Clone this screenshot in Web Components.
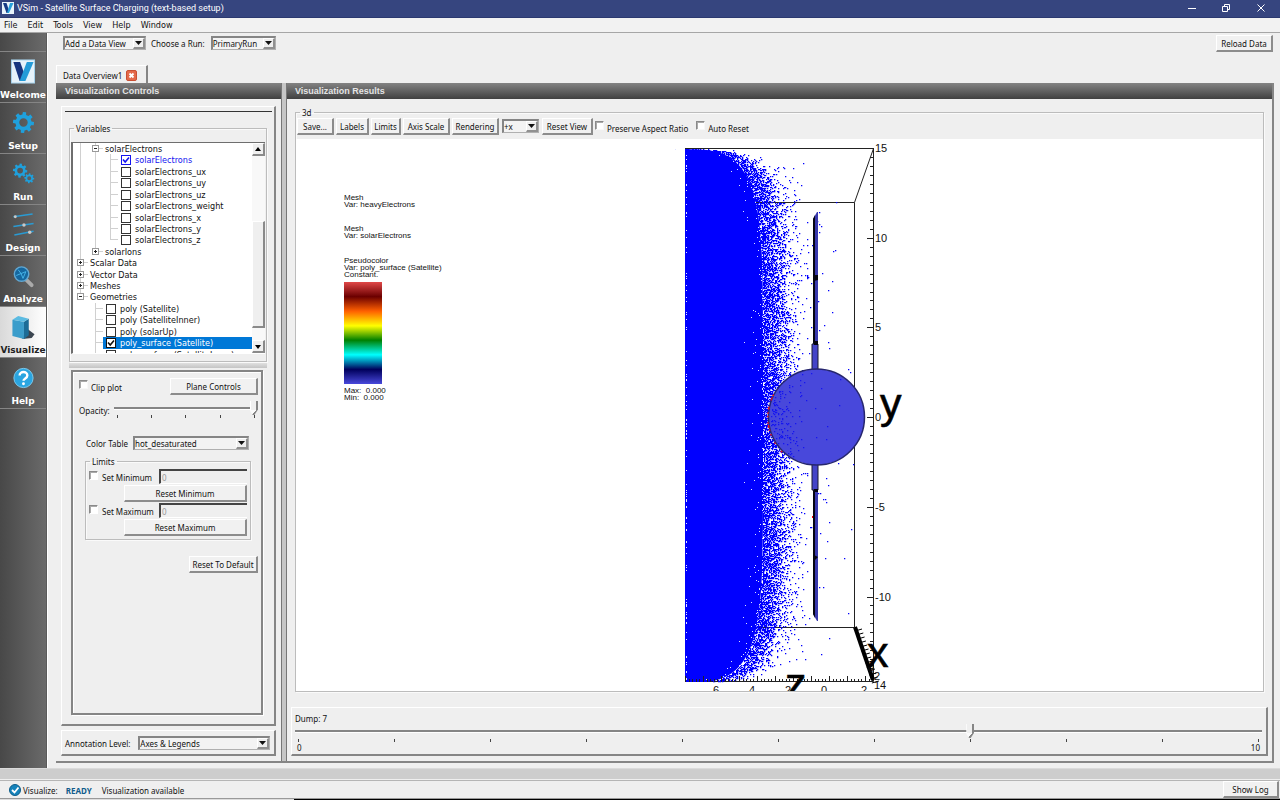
<!DOCTYPE html>
<html lang="en">
<head>
<meta charset="utf-8">
<title>VSim - Satellite Surface Charging (text-based setup)</title>
<style>
  html, body { margin: 0; height: 100%; }
  body {
    background: #efefef; color: #111; overflow: hidden;
    font: 8px/11px "Noto Sans", "DejaVu Sans Condensed", sans-serif;
    --hi: #fff; --lo: #858585; --face: #efefef;
  }
</style>
</head>
<body>
<vs-app></vs-app>
<script>
const base = `
  *, *::before, *::after { box-sizing: border-box; }
  :host { box-sizing: border-box; display: block; }
  :host([hidden]) { display: none; }
  button, input, select { font: inherit; color: inherit; margin: 0; border-radius: 0; }
`;
function define(name, css, html, after) {
  customElements.define(name, class extends HTMLElement {
    constructor() { super(); this.attachShadow({ mode: 'open' }); }
    connectedCallback() {
      if (this.shadowRoot.firstChild) return;
      const body = typeof html === 'function' ? html(this) : html;
      this.shadowRoot.innerHTML = `<style>${base}${css}</style>${body}`;
      if (after) after(this.shadowRoot, this);
    }
  });
}

/* ---------- basic controls ---------- */

define('vs-button', `
  :host { display: inline-block; }
  button { display: block; width: 100%; height: 17px; padding: 1px 2px 0; background: #f1f1f1; white-space: nowrap;
    border: solid; border-width: 1px 2px 2px 1px; border-color: var(--hi) #8c8c8c #8c8c8c var(--hi); line-height: 13px; }
`, `<button type="button"><slot></slot></button>`);

define('vs-check', `
  :host { display: inline-block; }
  label { display: flex; align-items: center; gap: 3px; white-space: nowrap; }
  input { appearance: none; width: 9px; height: 9px; background: #fff; align-self: flex-start;
    border: solid; border-width: 1px; border-color: #8a8a8a #f8f8f8 #f8f8f8 #8a8a8a; box-shadow: inset 1px 1px #aaa; }
  span { padding-top: 2px; }
`, `<label><input type="checkbox"><span><slot></slot></span></label>`);

define('vs-select', `
  :host { display: flex; align-items: center; }
  label { white-space: nowrap; margin-right: var(--label-gap, 6px); }
  .box { display: grid; flex: 1; min-width: 0; height: 14px; background: #f3f3f3;
    border: solid; border-width: 2px 1px 1px 2px; border-color: #858585 #b0b0b0 #b0b0b0 #858585; }
  select { appearance: none; grid-area: 1/1; width: 100%; height: 11px; padding: 0 12px 0 0; border: 0; background: none; line-height: 11px; outline: 0; }
  .arrow { grid-area: 1/1; justify-self: end; width: 12px; height: 11px; pointer-events: none; background: var(--face);
    border: solid; border-width: 1px 2px 2px 1px; border-color: var(--hi) #909090 #909090 var(--hi); }
  svg { display: block; width: 9px; height: 8px; }
`, el => {
  const label = el.getAttribute('label');
  const opts = el.getAttribute('options').split('|');
  return `${label ? `<label for="s">${label}</label>` : ''}<div class="box">
    <select id="s" aria-label="${label || el.getAttribute('name')}">${opts.map(o => `<option>${o}</option>`).join('')}</select>
    <span class="arrow"><svg viewBox="0 0 9 8"><path d="M1 2h7L4.500 6z" fill="#111"/></svg></span></div>`;
});

define('vs-group', `
  fieldset { margin: 0; min-width: 0; height: 100%; border: 1px solid #bcbcbc; padding: 0; box-shadow: inset 1px 1px #fafafa, 1px 1px #fafafa; }
  legend { margin-left: 4px; padding: 0 2px; }
`, el => `<fieldset><legend>${el.getAttribute('label')}</legend><slot></slot></fieldset>`);

define('vs-slider', `
  :host { display: flex; align-items: flex-start; }
  label { white-space: nowrap; padding-top: 4px; margin-right: 4px; }
  .rail { flex: 1; min-width: 0; }
  input { appearance: none; display: block; width: 100%; height: 14px; background: none; outline: 0; }
  input::-webkit-slider-runnable-track { height: 14px; background: linear-gradient(#858585, #858585) 0 6px / 100% 2px no-repeat, linear-gradient(#fff, #fff) 0 8px / 100% 1px no-repeat; }
  input::-webkit-slider-thumb { appearance: none; width: 8px; height: 14px;
    clip-path: polygon(0 0, 100% 0, 100% 60%, 55% 100%, 35% 100%, 0 70%);
    background: linear-gradient(90deg, #fff 0 1px, #efefef 1px 6px, #858585 6px) 0 0 / 100% 9px no-repeat, linear-gradient(135deg, #fafafa 0 50%, #858585 50%) 0 9px / 100% 5px no-repeat; }
  .ticks { display: flex; justify-content: space-between; padding: 0 3px; }
  :host([stacked]) .ticks { padding-top: 1px; }
  .ticks i { width: 1px; height: 3px; background: #444; }
`, el => {
  const n = +el.getAttribute('ticks');
  const l = el.getAttribute('label');
  return `${el.hasAttribute('stacked') ? '' : `<label for="r">${l}</label>`}
  <div class="rail"><input id="r" type="range" aria-label="${l}" min="0" max="${n - 1}" value="${el.getAttribute('value')}">
  <div class="ticks">${'<i></i>'.repeat(n)}</div></div>`;
});

define('vs-header', `
  :host { height: 16px; padding: 0 8px; font: bold 9px/16px "Liberation Sans", Arial, sans-serif; color: #e4e4e4;
    background: linear-gradient(#838383, #404040); }
`, `<slot></slot>`);

define('vs-raised', `
  :host { border: solid; border-width: 1px 2px 2px 1px; border-color: var(--hi) var(--lo) var(--lo) var(--hi); min-width: 0; }
`, `<slot></slot>`);

/* ---------- window chrome ---------- */

define('vs-titlebar', `
  :host { display: flex; align-items: center; height: 18px; padding: 0 12px 1px 2px; background: #36457f; border-bottom: 1px solid #2b3970;
    color: #fff; font: 9px/15px Roboto, "Noto Sans", sans-serif; }
  svg { display: block; }
  h1 { flex: 1; margin: 0 0 0 3px; padding-top: 1px; font: inherit; }
  nav { display: flex; gap: 20px; }
  button { padding: 0; border: 0; background: none; width: 14px; height: 14px; }
`, `
  <svg width="12" height="12" viewBox="0 0 24 24"><rect width="24" height="24" fill="#e9f4fb"/><path d="M2 2h7l5 15-2 5h-3z" fill="#173a86"/><path d="M16 2h7L14 22h-4z" fill="#27a0db"/></svg>
  <h1>VSim - Satellite Surface Charging (text-based setup)</h1>
  <nav>
    <button type="button" aria-label="Minimize"><svg width="14" height="14" viewBox="0 0 14 14"><path d="M2 7.500h8" stroke="#fff"/></svg></button>
    <button type="button" aria-label="Restore"><svg width="14" height="14" viewBox="0 0 14 14" fill="none" stroke="#fff"><path d="M2.500 5.500h5v5h-5zM4.500 5V3.500h5v5H8"/></svg></button>
    <button type="button" aria-label="Close"><svg width="14" height="14" viewBox="0 0 14 14" stroke="#fff"><path d="M3.500 3.500l7 7m0-7l-7 7"/></svg></button>
  </nav>`);

define('vs-menubar', `
  :host { height: 15px; background: #f2f2f2; border-bottom: 1px solid #a6a6a6; font: 9px/15px "DejaVu Sans Condensed", "DejaVu Sans", sans-serif; }
  nav { display: flex; gap: 10px; padding: 0 4px; }
  a { color: #111; text-decoration: none; }
`, `<nav><a href="#">File</a><a href="#">Edit</a><a href="#">Tools</a><a href="#">View</a><a href="#">Help</a><a href="#">Window</a></nav>`);

const gear = (cx, cy, r) => {
  let d = '';
  const n = 8, at = (rad, a) => `${(cx + rad * Math.cos(a)).toFixed(2)} ${(cy + rad * Math.sin(a)).toFixed(2)}`;
  for (let i = 0; i < n; i++) {
    const a = i * 2 * Math.PI / n + .1, s = Math.PI / n;
    d += `${i ? 'L' : 'M'}${at(r * .76, a - s * .6)}L${at(r, a - s * .4)}L${at(r, a + s * .4)}L${at(r * .76, a + s * .6)}`;
  }
  const h = r * .4;
  return `<path fill-rule="evenodd" fill="#1fa0dc" d="${d}ZM${cx - h} ${cy}a${h} ${h} 0 1 0 ${2 * h} 0a${h} ${h} 0 1 0 ${-2 * h} 0Z"/>`;
};
const icons = {
  welcome: `<rect x="1" y="1" width="24" height="24" fill="#e6f2fa" stroke="#a6d3ee"/><path d="M3 3h7l5 14-3 6H9.500z" fill="#17357f"/><path d="M17 3h7l-8.500 20h-6z" fill="#239bd8"/>`,
  setup: gear(13.5, 13, 11),
  run: gear(10, 10, 7.5) + gear(19.5, 18, 5.2),
  design: `<g stroke="#2a9bd3" stroke-width="1.500"><path d="M3 5l20-3M3 15l21-3M4 24l20-4"/></g><g fill="#c8c8c8"><circle cx="5" cy="5" r="1.500"/><circle cx="14" cy="13.500" r="1.800"/><circle cx="20" cy="21" r="1.800"/></g>`,
  analyze: `<path d="M16 17l6 6" stroke="#aaa" stroke-width="4" stroke-linecap="round"/><circle cx="11.500" cy="11.500" r="7.500" fill="#15679f" stroke="#61a7d2" stroke-width="1.500"/><path d="M8 7l3 4 5-2-3 7M6 13l5-2 2 5" fill="none" stroke="#46b4e8"/>`,
  visualize: `<path d="M12 26l10-1 3-4-8-6z" fill="#3b4550"/><path d="M2 6l12 2v18L2 23z" fill="#3b9dcb"/><path d="M14 8l5-3v17l-5 4z" fill="#1c6c97"/><path d="M2 6l6-4 11 3-5 3z" fill="#5bbbe2"/>`,
  help: `<circle cx="13.500" cy="13.500" r="10" fill="#2aa5e0" stroke="#7fcbee"/><path d="M9.500 11c0-5 8-5 8 0 0 3-4 3-4 5.500" fill="none" stroke="#fff" stroke-width="2.500"/><circle cx="13.500" cy="19.500" r="1.500" fill="#fff"/>`
};

define('vs-nav-item', `
  a { display: flex; flex-direction: column; align-items: center; gap: 5px; height: 51px; padding: 7px 0 0;
    border-top: 1px solid #858585; color: #fff; text-decoration: none; font: bold 9px/13px "DejaVu Sans", sans-serif; }
  svg { display: block; }
  :host([active]) a { color: #222; background: linear-gradient(90deg, #d9d9d9, #fff); }
`, el => `<a href="#"><svg width="26" height="26" viewBox="0 0 26 26">${icons[el.getAttribute('icon')]}</svg><span><slot></slot></span></a>`);

define('vs-sidebar', `
  :host { background: linear-gradient(90deg, #484848, #6a6a6a); border-right: 1px solid #5a5a5a; padding-top: 18px; }
  nav { border-bottom: 1px solid #858585; }
`, `<nav>
  <vs-nav-item icon="welcome">Welcome</vs-nav-item><vs-nav-item icon="setup">Setup</vs-nav-item>
  <vs-nav-item icon="run">Run</vs-nav-item><vs-nav-item icon="design">Design</vs-nav-item>
  <vs-nav-item icon="analyze">Analyze</vs-nav-item><vs-nav-item icon="visualize" active>Visualize</vs-nav-item>
  <vs-nav-item icon="help">Help</vs-nav-item></nav>`);

define('vs-toolbar', `
  :host { display: flex; align-items: flex-start; height: 32px; padding: 2px 1px 0 7px; }
  .view { width: 83px; margin: 1px 5px 0 0; }
  .run { width: 125px; margin-top: 1px; --label-gap: 6px; }
  .reload { margin-left: auto; width: 57px; }
`, `<vs-select class="view" name="Data view" options="Add a Data View"></vs-select>
  <vs-select class="run" label="Choose a Run:" options="PrimaryRun"></vs-select>
  <vs-button class="reload">Reload Data</vs-button>`);

define('vs-tab', `
  :host { display: flex; align-items: center; gap: 4px; width: 92px; height: 18px; padding: 1px 0 0 6px;
    border: solid; border-width: 1px 2px 0 1px; border-color: #fff #858585 #fff #fff; white-space: nowrap; }
  button { padding: 0; border: 0; background: none; }
  svg { display: block; }
`, `<span><slot></slot></span><button type="button" aria-label="Close tab"><svg width="11" height="11" viewBox="0 0 11 11"><rect x=".5" y=".5" width="10" height="10" rx="1.500" fill="#e4694a" stroke="#c94f33"/><path d="M3.500 3.500l4 4m0-4l-4 4" stroke="#fff" stroke-width="1.800"/></svg></button>`);

/* ---------- variable tree ---------- */

define('vs-node', `
  :host { display: flex; align-items: stretch; min-height: 0; white-space: nowrap; overflow: visible; }
  .g { flex: none; width: 15px; position: relative; }
  .g.line::before, .j::before { content: ""; position: absolute; left: 7px; top: 0; bottom: 0; border-left: 1px solid #d0d0d0; }
  .j.end::before { bottom: 50%; }
  .j::after { content: ""; position: absolute; left: 8px; right: 0; top: 5px; border-top: 1px solid #d0d0d0; }
  .x { position: absolute; z-index: 1; left: 4px; top: 2px; width: 7px; height: 7px; padding: 0; border: 1px solid #999; background: linear-gradient(#222, #222) 1px 2px / 3px 1px no-repeat #fff; }
  .x.plus { background: linear-gradient(#222, #222) 1px 2px / 3px 1px no-repeat, linear-gradient(#222, #222) 2px 1px / 1px 3px no-repeat #fff; }
  label { display: flex; flex: 1; }
  input { appearance: none; flex: none; width: 10px; height: 10px; margin: 1px 3px 0 3px; border: 1px solid #333; background: #fff; }
  :host([checked]) input { border-color: currentColor; }
  .in { position: relative; display: flex; }
  svg { position: absolute; left: 4px; top: 2px; pointer-events: none; }
  .t { flex: 1; padding-left: 2px; line-height: 12px; }
  .c .t { padding-left: 1px; }
  :host([checked]) { color: #1414f0; }
  :host([selected]) { color: #fff; }
  :host([selected]) .c { background: #0078d7; }
  :host([selected]) input { border-color: #111; }
  :host([selected]) svg { color: #111; }
`, el => {
  const lines = el.getAttribute('lines') || '';
  const kind = el.getAttribute('kind');
  const pos = el.getAttribute('pos') || '';
  let h = [...lines].map(c => `<span class="g${c === '1' ? ' line' : ''}"></span>`).join('');
  h += `<span class="g j ${pos}">${kind === 'leaf' ? '' : `<button type="button" class="x ${kind}" aria-label="Toggle"></button>`}</span>`;
  if (kind !== 'leaf') return h + `<span class="t"><slot></slot></span>`;
  const ck = el.hasAttribute('checked');
  return h + `<label class="c"><span class="in"><input type="checkbox"${ck ? ' checked' : ''}>${ck ? `<svg width="8" height="8" viewBox="0 0 8 8"><path d="M1 3.500l2.200 2.500L7 1.500" fill="none" stroke="currentColor" stroke-width="1.600"/></svg>` : ''}</span><span class="t"><slot></slot></span></label>`;
});

define('vs-scrollbar', `
  :host { display: flex; flex-direction: column; width: 13px; background: #f8f8f8; }
  button { flex: none; height: 13px; padding: 0; background: var(--face); border: solid; border-width: 1px 2px 2px 1px; border-color: #fff #8a8a8a #8a8a8a #fff; }
  svg { display: block; width: 10px; height: 10px; }
  .up { flex: 66; } .thumb { flex: 106; background: var(--face); border: solid; border-width: 1px 2px 2px 1px; border-color: #fff #8a8a8a #8a8a8a #fff; } .dn { flex: 12; }
`, `<button type="button" aria-label="Scroll up"><svg viewBox="0 0 10 10"><path d="M2 7h6L5 3z"/></svg></button>
  <i class="up"></i><i class="thumb"></i><i class="dn"></i>
  <button type="button" aria-label="Scroll down"><svg viewBox="0 0 10 10"><path d="M2 4h6L5 8z"/></svg></button>`);

const leaf = (lines, text, extra = '') => `<vs-node kind="leaf" lines="${lines}" ${extra}>${text}</vs-node>`;
define('vs-tree', `
  :host { display: flex; height: 212px; background: #fff; border: solid; border-width: 1px 0 1px 2px; border-color: #6e6e6e #fff #fff #6e6e6e;
    font-family: "DejaVu Sans Condensed", "DejaVu Sans", sans-serif; font-size: 9px; }
  .view { flex: 1; min-width: 0; overflow: hidden; }
  .rows { display: grid; grid-auto-rows: 1fr; height: 217px; }
`, `<div class="view"><div class="rows">
  <vs-node kind="minus" lines="1">solarElectrons</vs-node>
  ${leaf('11', 'solarElectrons', 'checked')}
  ${['ux', 'uy', 'uz', 'weight', 'x', 'y'].map(s => leaf('11', 'solarElectrons_' + s)).join('')}
  ${leaf('11', 'solarElectrons_z', 'pos="end"')}
  <vs-node kind="plus" lines="1" pos="end">solarIons</vs-node>
  <vs-node kind="plus">Scalar Data</vs-node>
  <vs-node kind="plus">Vector Data</vs-node>
  <vs-node kind="plus">Meshes</vs-node>
  <vs-node kind="minus" pos="end">Geometries</vs-node>
  ${leaf('0', 'poly (Satellite)')}${leaf('0', 'poly (SatelliteInner)')}${leaf('0', 'poly (solarUp)')}
  ${leaf('0', 'poly_surface (Satellite)', 'checked selected')}
  ${leaf('0', 'poly_surface (SatelliteInner)')}
  </div></div><vs-scrollbar></vs-scrollbar>`);

/* ---------- left column ---------- */

define('vs-limit', `
  .row { display: grid; grid-template-columns: 70px 1fr; align-items: start; }
  label { display: flex; gap: 4px; align-items: flex-start; white-space: nowrap; }
  label input { appearance: none; width: 9px; height: 9px; margin: 2px 0 0; background: #fff; border: 1px solid; border-color: #8a8a8a #fff #fff #8a8a8a; box-shadow: inset 1px 1px #aaa; }
  label span { padding-top: 3px; }
  .n { width: 100%; height: 15px; padding: 1px 0 0 1px; background: var(--face); color: #999; border: solid; border-width: 2px 0 1px 2px; border-color: #444 #fff #fff #444; }
  vs-button { display: block; margin: 1px 0 1px 35px; }
`, el => { const n = el.getAttribute('name');
  return `<div class="row"><label><input type="checkbox"><span>Set ${n}</span></label><input class="n" type="text" value="0" disabled aria-label="${n}"></div>
  <vs-button>Reset ${n}</vs-button>`; });

define('vs-plot-options', `
  :host { display: flex; flex-direction: column; flex: 1; min-height: 0; padding: 5px 3px 0 6px;
    border: 2px solid var(--lo); box-shadow: inset 1px 1px #fff, 1px 1px #fff; }
  .clip { display: flex; justify-content: space-between; }
  .clip vs-check { margin-top: 3px; }
  .clip vs-button { width: 88px; margin-top: 1px; }
  .op { margin-top: 6px; }
  .ct { width: 163px; margin: 18px 0 0 7px; --label-gap: 5px; }
  .lim { width: 166px; height: 84px; margin: 6px 0 0 6px; }
  .in { padding: 2px 3px 0; }
  .def { align-self: flex-end; width: 69px; margin-top: 16px; }
`, `<div class="clip"><vs-check>Clip plot</vs-check><vs-button>Plane Controls</vs-button></div>
  <vs-slider class="op" label="Opacity:" ticks="5" value="4"></vs-slider>
  <vs-select class="ct" label="Color Table" options="hot_desaturated"></vs-select>
  <vs-group class="lim" label="Limits"><div class="in"><vs-limit name="Minimum"></vs-limit><vs-limit name="Maximum"></vs-limit></div></vs-group>
  <vs-button class="def">Reset To Default</vs-button>`);

define('vs-controls', `
  :host { display: flex; flex-direction: column; }
  vs-header { padding-left: 9px; }
  .main { display: flex; flex-direction: column; flex: 1; min-height: 0; margin: 7px 5px 0; padding: 4px 7px 9px; }
  hr { width: auto; height: 1px; margin: 0 -5px 11px -4px; border: 0; background: #333; }
  .vars { height: 239px; flex: none; }
  .tree { padding: 8px 1px 0; }
  .split { height: 5px; margin: 1px 0 2px; background: linear-gradient(#e0e0e0, #c4c4c4); flex: none; }
  vs-plot-options { margin: 0 4px 0 2px; }
  .ann { margin: 4px 5px 5px; padding: 5px 4px 4px 3px; height: 26px; }
  .ann vs-select { --label-gap: 8px; }
`, `<vs-header>Visualization Controls</vs-header>
  <vs-raised class="main"><hr>
    <vs-group class="vars" label="Variables"><div class="tree"><vs-tree></vs-tree></div></vs-group>
    <div class="split"></div>
    <vs-plot-options></vs-plot-options>
  </vs-raised>
  <vs-raised class="ann"><vs-select label="Annotation Level:" options="Axes &amp; Legends"></vs-select></vs-raised>`);

/* ---------- 3d scene ---------- */

function scene() {
  let seed = 20231;
  const rnd = () => ((seed = (seed * 1664525 + 1013904223) >>> 0) / 4294967296);
  const L = 389, CY = 277;
  const edge = y => L + 82 * Math.pow(Math.max(0, 1 - Math.pow(Math.min(1, Math.abs(y - CY) / 267), 6)), .3);
  let solid = `M${L} 10`, dots = '', holes = '', over = '', red = '';
  for (let y = 10; y <= 543; y++) solid += `L${Math.max(L, edge(y) - 4).toFixed(1)} ${y}`;
  solid += `L${L} 543Z`;
  for (let y = 10; y < 543; y++) {
    const e = edge(y);
    const lim = Math.min(1, .6 + Math.min(y - 10, 543 - y) / 50);
    for (let x = Math.max(L, Math.round(e) - 4); x < e + 88; x++) {
      const d = (x - e) / lim;
      const p = .62 / (1 + Math.exp((d - 14) / 6)) + .06 * Math.exp(-Math.max(0, d) / 20);
      if (rnd() < p) {
        const inBall = (x - 521) ** 2 + (y - 278) ** 2 < 47 ** 2;
        if (!inBall) dots += `M${x} ${y}h1.300v1.300h-1.300z`;
        else if (rnd() < .35) over += `M${x} ${y}h1.300v1.300h-1.300z`;
      }
    }
    if (rnd() < .35) holes += `M${(e - 4 - rnd() * rnd() * 20).toFixed(0)} ${y}h1v1h-1z`;
    if (rnd() < .18) holes += `M${L + 1} ${y}h1v1h-1z`;
  }
  for (let i = 0; i < 16; i++) {
    const a = Math.PI + (rnd() - .6) * 1.3;
    red += `M${(520 + 49 * Math.cos(a)).toFixed(1)} ${(278 + 49 * Math.sin(a)).toFixed(1)}h1.500v1.500h-1.500z`;
  }
  let t = '';
  for (let i = 0; i <= 59; i++) { const y = 9.5 + Math.round(i * 8.97); t += i % 10 ? `M574 ${y}h4` : `M571 ${y}h7`; }
  for (let i = 0; i < 53; i++) { const x = 389.5 + Math.round(i * 3.6); t += `M${x} 543v${i % 5 ? -3 : -6}`; }
  let xt = '';
  for (let i = 0; i < 14; i++) xt += `M${559 + i * 1.3} ${492 + i * 4}l7 -2`;
  return `<svg viewBox="0 0 967 552" preserveAspectRatio="xMidYMid slice" role="img" aria-label="3d view">
    <defs><linearGradient id="bar" x1="0" y1="0" x2="0" y2="1">
      <stop offset="0" stop-color="#e04848"/><stop offset=".143" stop-color="#6b0000"/><stop offset=".286" stop-color="#ff6000"/><stop offset=".43" stop-color="#ff0"/>
      <stop offset=".57" stop-color="#008000"/><stop offset=".714" stop-color="#0ff"/><stop offset=".857" stop-color="#00005b"/><stop offset="1" stop-color="#4848db"/></linearGradient></defs>
    <g fill="none" stroke="#222"><path d="M389 9.500H577.500L558.500 63.500H440M558.500 63.500V488.500H440M577.500 9.500V542.500H389M389.500 9v534"/></g>
    <path d="${solid}" fill="#00f"/><path d="${dots}" fill="#00f"/><path d="${holes}" fill="#dfe3ff"/>
    <path d="${t}" stroke="#222" fill="none"/>
    <path d="M517 80l4 -7h1v156h-5z" fill="#3838ac"/><path d="M517 80l2 -4v154h-2z" fill="#050510"/><path d="M516 205h6v26h-6z" fill="#4444c8" stroke="#181830"/>
    <path d="M517 475l4 7h1V326h-5z" fill="#3838ac"/><path d="M517 475l2 4V326h-2z" fill="#050510"/><path d="M516 325h6v26h-6z" fill="#4444c8" stroke="#181830"/>
    <path d="M518 136h4v5l-4 1zM518 202h4v4h-4zM518 416l4 2-4 4zM518 350h4v3h-4z" fill="#050510"/>
    <circle cx="520.500" cy="278" r="48" fill="#4848db" stroke="#26266e" stroke-width="1.500"/>
    <path d="${over}" fill="#1515f0"/><path d="${red}" fill="#f01020"/><path d="M516 377h1v2h-1z" fill="red"/>
    <path d="M559 488L577 541" stroke="#000" stroke-width="4"/><path d="${xt}" stroke="#000"/>
    <g font-family="Liberation Sans, Arial, sans-serif" font-size="11" fill="#111">
      <text x="579" y="13">15</text><text x="579" y="103">10</text><text x="579" y="192">5</text><text x="579" y="282">0</text><text x="579" y="372">-5</text><text x="579" y="462">-10</text>
      <text x="417" y="555">6</text><text x="453" y="555">4</text><text x="489" y="555">2</text><text x="525" y="555">0</text><text x="565" y="555">2</text>
      <text x="572" y="533">0</text><text x="578" y="541">2</text><text x="578" y="550">14</text>
    </g>
    <g font-family="Liberation Sans, Arial, sans-serif" font-size="43" fill="#000" stroke="#000" stroke-width=".6">
      <text x="584" y="279">y</text><text x="571" y="528">x</text><text x="489" y="559">z</text></g>
    <g font-family="Liberation Sans, Arial, sans-serif" font-size="8" fill="#111">
      <text x="48" y="61">Mesh</text><text x="48" y="68">Var: heavyElectrons</text>
      <text x="48" y="92">Mesh</text><text x="48" y="99">Var: solarElectrons</text>
      <text x="48" y="124">Pseudocolor</text><text x="48" y="131">Var: poly_surface (Satellite)</text><text x="48" y="138">Constant.</text>
      <text x="48" y="254">Max:&#160; 0.000</text><text x="48" y="261">Min:&#160; 0.000</text></g>
    <rect x="48" y="143" width="38" height="102" fill="url(#bar)"/>
  </svg>`;
}
define('vs-scene', `
  :host { background: #fff; overflow: hidden; min-height: 0; }
  svg { display: block; width: 100%; height: 100%; }
`, scene);

define('vs-results', `
  :host { display: flex; flex-direction: column; min-width: 0; }
  .view { flex: 1; min-height: 0; margin: 8px 8px 0 8px; }
  .in { display: flex; flex-direction: column; height: 100%; }
  .bar { display: flex; flex: none; align-items: flex-start; gap: 2px; height: 21px; padding-left: 1px; }
  .cmd { width: var(--w); }
  .bar vs-select { width: 37px; margin: 1px 1px 0; }
  .bar vs-check { margin: 3px 6px 0 0; }
  vs-scene { flex: 1; }
  .dump { margin: 15px 4px 5px; height: 49px; padding: 5px 4px 0 3px; }
  .ends { display: flex; justify-content: space-between; padding: 0 2px; }
`, `<vs-header>Visualization Results</vs-header>
  <vs-group class="view" label="3d"><div class="in">
    <div class="bar">
      <vs-button style="--w:37px" class="cmd">Save...</vs-button><vs-button style="--w:33px" class="cmd">Labels</vs-button>
      <vs-button style="--w:30px" class="cmd">Limits</vs-button><vs-button style="--w:47px" class="cmd">Axis Scale</vs-button>
      <vs-button style="--w:47px" class="cmd">Rendering</vs-button><vs-select name="View axis" options="+x"></vs-select>
      <vs-button style="--w:51px" class="cmd">Reset View</vs-button>
      <vs-check>Preserve Aspect Ratio</vs-check><vs-check>Auto Reset</vs-check>
    </div><vs-scene></vs-scene></div></vs-group>
  <vs-raised class="dump"><div>Dump: 7</div><vs-slider stacked label="Dump" ticks="11" value="7"></vs-slider><div class="ends"><span>0</span><span>10</span></div></vs-raised>`);

define('vs-statusbar', `
  :host { display: flex; align-items: center; height: 19px; padding: 0 1px 0 9px; border-top: 1px solid #b5b5b5; border-bottom: 1px solid #999; }
  svg { display: block; margin-right: 2px; }
  span, b { padding-top: 1px; }
  b { margin: 0 10px 0 8px; color: #0f5c8c; }
  vs-button { margin-left: auto; width: 56px; }
`, `<svg width="12" height="12" viewBox="0 0 12 12"><circle cx="6" cy="6" r="5.500" fill="#1583bb" stroke="#0d5c88"/><path d="M3 6l2.500 2.500L9.500 3.500" fill="none" stroke="#fff" stroke-width="1.800"/></svg>
  <span>Visualize:</span><b>READY</b><span>Visualization available</span><vs-button>Show Log</vs-button>`);

define('vs-app', `
  :host { display: grid; grid-template-rows: auto auto 1fr auto auto auto; height: 100vh; }
  .mid { display: grid; grid-template-columns: 47px 1fr; min-height: 0; }
  .content { display: flex; flex-direction: column; min-width: 0; padding: 0 6px 6px 8px; border-left: 1px solid #fff; }
  .work { display: grid; grid-template-columns: 225px 6px 1fr; flex: 1; min-height: 0; border: solid; border-width: 0 2px 2px 0; border-color: var(--lo); }
  .split { background: linear-gradient(90deg, #777 0 1px, #c6c6c6 1px 5px, #777 5px); }
  .band { height: 11px; background: #cdcdcd; border-top: 1px solid #dadada; margin-bottom: 1px; }
  .edge { height: 1px; background: linear-gradient(90deg, #ddd 0 23%, #000 23%); }
`, `<vs-titlebar></vs-titlebar><vs-menubar></vs-menubar>
  <div class="mid"><vs-sidebar></vs-sidebar><div class="content">
    <vs-toolbar></vs-toolbar><vs-tab>Data Overview1</vs-tab>
    <div class="work"><vs-controls></vs-controls><div class="split"></div><vs-results></vs-results></div>
  </div></div>
  <div class="band"></div><vs-statusbar></vs-statusbar><div class="edge"></div>`);
</script>
</body>
</html>
